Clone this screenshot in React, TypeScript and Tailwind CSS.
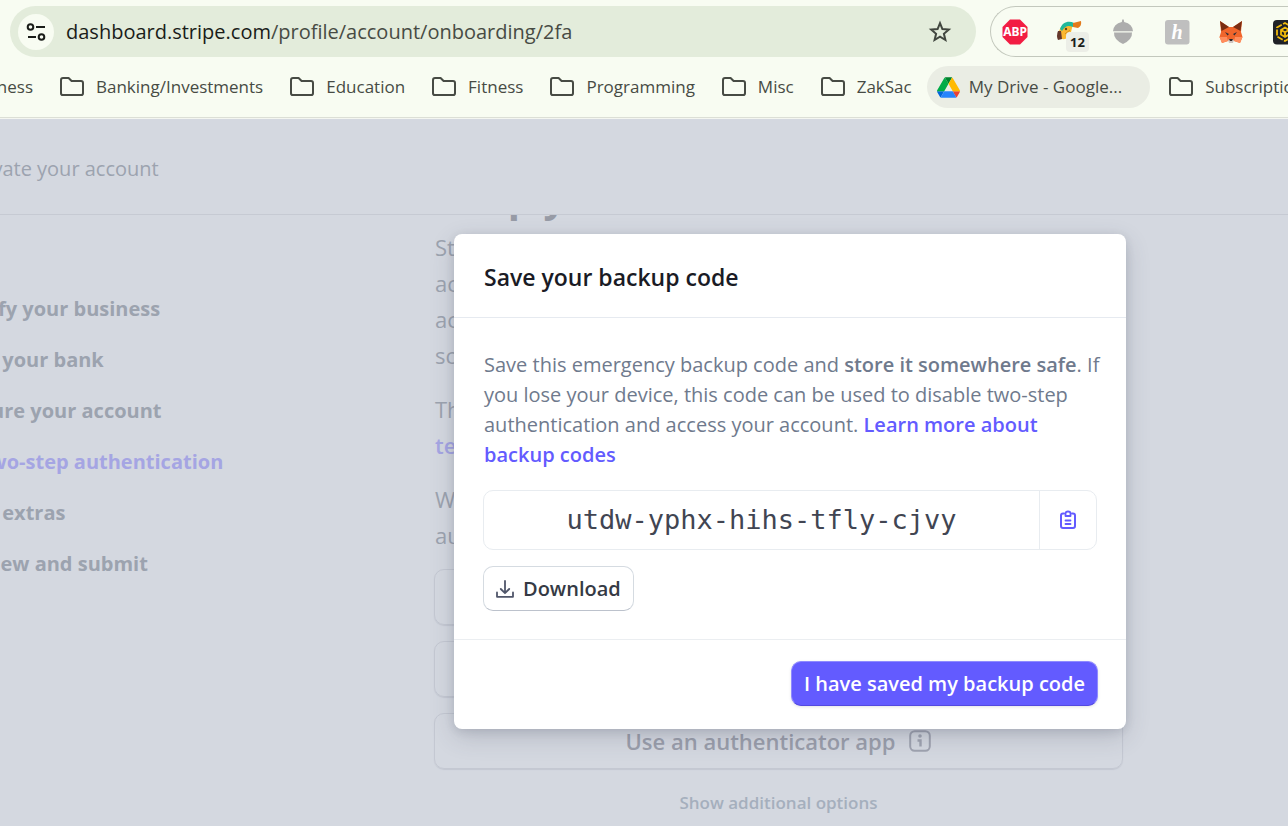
import React from 'react';

const bookmarks = ['Banking/Investments', 'Education', 'Fitness', 'Programming', 'Misc', 'ZakSac'];

function FolderIcon() {
  return (
    <svg width="24" height="20" viewBox="0 0 24 20" fill="none" className="shrink-0">
      <path
        d="M1 3.2Q1 1 3 1H8.600L11.600 4H21Q23 4 23 6V16.200Q23 18 21.200 18H2.800Q1 18 1 16.200Z"
        stroke="#474b44"
        strokeWidth="2"
        strokeLinejoin="round"
      />
    </svg>
  );
}

function TuneIcon() {
  return (
    <svg width="20" height="20" viewBox="0 0 20 20" fill="none" stroke="#1a1d19" strokeWidth="2">
      <circle cx="4.5" cy="5" r="2.8" />
      <path d="M10 5H19M2 15H10" />
      <circle cx="15.5" cy="15" r="2.8" />
    </svg>
  );
}

function StarIcon() {
  return (
    <svg width="24" height="24" viewBox="0 0 24 24" fill="none" stroke="#41463f" strokeWidth="2">
      <path d="M12 3.2L14.4 9.1L20.8 9.6L15.9 13.8L17.4 20L12 16.7L6.6 20L8.1 13.8L3.2 9.6L9.6 9.1Z" />
    </svg>
  );
}

function DriveIcon() {
  return (
    <svg width="23" height="21" viewBox="0 0 87.3 78" className="shrink-0">
      <path fill="#0066da" d="m6.6 66.85 3.85 6.65c.8 1.4 1.95 2.5 3.3 3.3l13.75-23.8h-27.5c0 1.55.4 3.1 1.2 4.5z" />
      <path fill="#00ac47" d="m43.65 25-13.75-23.8c-1.35.8-2.5 1.9-3.3 3.3l-25.4 44a9.06 9.06 0 0 0 -1.2 4.5h27.5z" />
      <path fill="#ea4335" d="m73.55 76.8c1.35-.8 2.5-1.9 3.3-3.3l1.6-2.75 7.65-13.25c.8-1.4 1.2-2.95 1.2-4.5h-27.502l5.852 11.5z" />
      <path fill="#00832d" d="m43.65 25 13.75-23.8c-1.35-.8-2.9-1.2-4.5-1.2h-18.5c-1.6 0-3.15.45-4.5 1.2z" />
      <path fill="#2684fc" d="m59.8 53h-32.3l-13.75 23.8c1.35.8 2.9 1.2 4.5 1.2h50.8c1.6 0 3.15-.45 4.5-1.2z" />
      <path fill="#ffba00" d="m73.4 26.5-12.7-22c-.8-1.4-1.95-2.5-3.3-3.3l-13.75 23.8 16.15 28h27.45c0-1.55-.4-3.1-1.2-4.5z" />
    </svg>
  );
}

function AdblockIcon() {
  return (
    <svg width="26" height="26" viewBox="0 0 26 26">
      <path d="M8 .5H18L25.5 8V18L18 25.5H8L.5 18V8Z" fill="#f21d43" />
      <text x="13" y="17.4" textAnchor="middle" fill="#fff" fontSize="12" fontWeight="700" fontFamily="Noto Sans, sans-serif">
        ABP
      </text>
    </svg>
  );
}

function BirdIcon() {
  return (
    <svg width="26" height="26" viewBox="0 0 26 26">
      <path d="M3 12C6 5 11 3 17 5L14 17C10 21 5 21 4 18Z" fill="#fbb72f" />
      <path d="M4 10C6 3 13 1 18 4L17 8C12 6 9 7 6 12Z" fill="#1fb89b" />
      <path d="M17 4L25 2Q26 7 22 9L17 8Z" fill="#e27a1c" />
      <path d="M2 12Q0 17 2 21L6 20L5 12Z" fill="#65382b" />
      <circle cx="10" cy="10" r="1.2" fill="#5b4b1c" />
      <path d="M9 15L14 11" stroke="#d18b1c" />
    </svg>
  );
}

function AcornIcon() {
  return (
    <svg width="26" height="26" viewBox="0 0 26 26" fill="#adadad">
      <path d="M12.300 .5H13.700L14.200 3Q22.500 5 23 12.200H3Q3.500 5 11.800 3Z" />
      <path d="M4 13.500H22Q22.500 20.500 13 25Q3.500 20.500 4 13.500Z" />
    </svg>
  );
}

function HoneyIcon() {
  return (
    <svg width="26" height="26" viewBox="0 0 26 26">
      <rect x="1" y="1" width="24.5" height="24.5" rx="3" fill="#bfbfbf" />
      <text x="13" y="20" textAnchor="middle" fill="#fff" fontSize="20" fontStyle="italic" fontWeight="700" fontFamily="Liberation Serif, serif">
        h
      </text>
    </svg>
  );
}

function FoxIcon() {
  return (
    <svg width="26" height="26" viewBox="0 0 26 26">
      <path d="M2 2L11 8H15L24 2L23 13L24.500 18L22 24L16 22H10L4 24L1.500 18L3 13Z" fill="#f0652b" />
      <path d="M2 2L11 8L3.500 12ZM24 2L15 8L22.500 12Z" fill="#7a2d12" />
      <path d="M4 24L1.500 18H9L10 22ZM22 24L24.500 18H17L16 22Z" fill="#ff8d5d" />
      <path d="M7 13L11 15L9.500 16.500ZM19 13L15 15L16.500 16.500Z" fill="#2b2f3a" />
      <path d="M10 21L11 24H15L16 21L14.500 20H11.500Z" fill="#cfc4c0" />
      <path d="M11 20H15L14 22H12Z" fill="#2b2020" />
    </svg>
  );
}

function CubeIcon() {
  return (
    <svg width="26" height="26" viewBox="0 0 26 26">
      <rect x="1" y="1" width="25" height="24.500" rx="4" fill="#1f2127" />
      <g fill="none" stroke="#f0b90b" strokeWidth="1.800">
        <path d="M13 4L21 8.500V17.500L13 22L5 17.500V8.500Z" strokeDasharray="6 1.500" />
        <path d="M9 11L13 8.500L17 11V15.500L13 18L9 15.500ZM9 11L13 13.300L17 11M13 13.300V18" />
      </g>
    </svg>
  );
}

function ClipboardIcon() {
  return (
    <svg width="18" height="20" viewBox="0 0 18 20" fill="none" stroke="#635bff" strokeWidth="2" strokeLinecap="round" strokeLinejoin="round">
      <path d="M5 3.500H4Q2 3.500 2 5.500V16Q2 18 4 18H14Q16 18 16 16V5.500Q16 3.500 14 3.500H13" />
      <path d="M6.500 3.500Q6.500 1.500 9 1.500T11.500 3.500V6H6.500Z" strokeWidth="1.800" />
      <path d="M6.500 10.500H11.500M6.500 14H11.500" strokeWidth="1.800" />
    </svg>
  );
}

function DownloadIcon() {
  return (
    <svg width="18" height="18" viewBox="0 0 18 18" fill="none" stroke="#50566a" strokeWidth="1.800" strokeLinecap="round" strokeLinejoin="round">
      <path d="M9 1V13M4.800 9L9 13.200L13.200 9M1 12.500V16.800H17V12.500" />
    </svg>
  );
}

function InfoIcon() {
  return (
    <svg width="22" height="22" viewBox="0 0 22 22" fill="none" stroke="#9fa3b0" strokeWidth="2">
      <rect x="1.200" y="1.200" width="19.600" height="19.600" rx="4.500" />
      <circle cx="11" cy="6" r="1.800" fill="#9fa3b0" stroke="none" />
      <path d="M8.500 10.500H11.500V16.500" strokeWidth="2.400" />
    </svg>
  );
}

function Browser() {
  return (
    <header className="shrink-0 border-b border-[#dcdfd6] bg-[#f8fcf2] pt-[6px]">
      <div className="flex gap-[14px] pl-[10px]">
        <div className="flex h-[51px] min-w-0 flex-1 items-center rounded-full bg-[#e3ecdb] pr-6 pl-2">
          <button aria-label="View site information" className="flex size-9 shrink-0 items-center justify-center rounded-full bg-[#f8fcf2]">
            <TuneIcon />
          </button>
          <div className="min-w-0 flex-1 truncate pl-3 text-[20px] text-[#474b44]">
            <span className="text-[#1a1d19]">dashboard.stripe.com</span>/profile/account/onboarding/2fa
          </div>
          <button aria-label="Bookmark this tab">
            <StarIcon />
          </button>
        </div>
        <div className="flex w-[298px] shrink-0 items-center gap-7 overflow-hidden rounded-l-full border border-r-0 border-[#c3c8bd] pl-[11px]">
          <button aria-label="Adblock" className="shrink-0"><AdblockIcon /></button>
          <button aria-label="Shopping helper" className="relative shrink-0">
            <BirdIcon />
            <span className="absolute top-[13px] left-[10px] rounded bg-[#eceee7] px-1 text-[13px] leading-5 font-bold text-[#1a1d19]">12</span>
          </button>
          <button aria-label="Acorn" className="shrink-0"><AcornIcon /></button>
          <button aria-label="Honey" className="shrink-0"><HoneyIcon /></button>
          <button aria-label="Fox wallet" className="shrink-0"><FoxIcon /></button>
          <button aria-label="Cube wallet" className="shrink-0"><CubeIcon /></button>
        </div>
      </div>
      <nav aria-label="Bookmarks" className="mt-[9px] mb-[9px] flex h-[42px] items-center gap-[27px] overflow-hidden text-[17px] whitespace-nowrap text-[#474b44]">
        <a href="#" className="flex w-[33px] shrink-0 justify-end overflow-hidden">Business</a>
        {bookmarks.map((name) => (
          <a key={name} href="#" className="flex shrink-0 items-center gap-3">
            <FolderIcon />
            {name}
          </a>
        ))}
        <a href="#" className="-mr-2 -ml-3 flex h-full shrink-0 items-center gap-[9px] rounded-full bg-[#eaede4] pr-7 pl-[10px]">
          <DriveIcon />
          My Drive - Google...
        </a>
        <a href="#" className="flex shrink-0 items-center gap-3">
          <FolderIcon />
          Subscriptions
        </a>
      </nav>
    </header>
  );
}

function Steps() {
  return (
    <nav aria-label="Onboarding steps" className="-ml-[42px] w-[476px] shrink-0 pt-[76px] text-[20px] leading-9 font-bold text-[#9ca3af]">
      <ul className="flex flex-col gap-[15px]">
        <li><a href="#">Verify your business</a></li>
        <li><a href="#">Add your bank</a></li>
        <li><a href="#">Secure your account</a></li>
        <li className="pl-5 text-[#a5a5e3]"><a href="#">Two-step authentication</a></li>
        <li><a href="#">Add extras</a></li>
        <li><a href="#">Review and submit</a></li>
      </ul>
    </nav>
  );
}

const option =
  'flex h-14 w-full items-center justify-center gap-[14px] rounded-[10px] border border-[#c4c8d2] shadow-[0_1px_1px_#c4c8d2] text-[22px] font-semibold text-[#9a9eab]';

function Content() {
  return (
    <main className="w-[689px]">
      <h1 className="-mt-[45px] mb-[5px] text-[40px] leading-[54px] font-bold text-[#979ba6]">Keep your</h1>
      <div className="flex flex-col gap-[18px] pl-px text-[22px] leading-9 text-[#9ca3af]">
        <p>St<br />ac<br />ac<br />sc</p>
        <p>Th<br /><a href="#" className="font-semibold text-[#a5a5e3]">te</a></p>
        <p>W<br />au</p>
      </div>
      <div className="mt-4 flex flex-col gap-4">
        <button aria-label="First method" className={option} />
        <button aria-label="Second method" className={option} />
        <button className={option}>
          Use an authenticator app
          <InfoIcon />
        </button>
      </div>
      <div className="mt-5 text-center">
        <button className="text-[17px] leading-7 font-semibold text-[#a5afbd]">Show additional options</button>
      </div>
    </main>
  );
}

function BackupDialog() {
  return (
    <section
      role="dialog"
      aria-labelledby="backup-title"
      className="w-[672px] rounded-lg bg-white shadow-[0_8px_24px_rgba(60,66,87,0.2),0_2px_8px_rgba(60,66,87,0.14)]"
    >
      <div className="border-b border-[#e6eaf0] px-[30px] pt-[26px] pb-[23px]">
        <h2 id="backup-title" className="text-[23px] leading-[34px] font-semibold text-[#1a1b25]">Save your backup code</h2>
      </div>
      <div className="px-[29px] pt-8 pb-7">
        <p className="-mr-2 pl-px text-[20px] leading-[30px] text-[#6f7a8d]">
          Save this emergency backup code and <strong className="font-semibold">store it somewhere safe</strong>. If
          you lose your device, this code can be used to disable two-step authentication and access your account.{' '}
          <a href="#" className="font-semibold text-[#635bff]">Learn more about backup codes</a>
        </p>
        <div className="mt-5 flex h-[60px] rounded-[10px] border border-[#e8ecf0]">
          <code className="flex flex-1 items-center justify-center font-['DejaVu_Sans_Mono',monospace] text-[27px] text-[#414552]">
            utdw-yphx-hihs-tfly-cjvy
          </code>
          <button aria-label="Copy backup code" className="flex w-[57px] items-center justify-center border-l border-[#e8ecf0]">
            <ClipboardIcon />
          </button>
        </div>
        <button className="mt-4 flex h-[45px] items-center gap-[9px] rounded-[10px] border border-[#d5dbe1] border-b-[#bcc2cc] px-3 text-[20px] font-semibold text-[#353a44]">
          <DownloadIcon />
          Download
        </button>
      </div>
      <div className="flex justify-end border-t border-[#ebeef1] px-[28px] pt-[21px] pb-[23px]">
        <button className="h-[45px] rounded-[10px] border border-[#8f8aff] border-b-[#5349e0] bg-[#635bff] px-3 text-[20px] font-semibold text-white shadow-[0_1px_3px_rgba(60,66,87,0.15)]">
          I have saved my backup code
        </button>
      </div>
    </section>
  );
}

export default function App() {
  return (
    <div className="flex h-screen flex-col overflow-hidden font-['Open_Sans','Noto_Sans',sans-serif]">
      <Browser />
      <div className="relative flex min-h-0 flex-1 flex-col border-t border-[#f4f6f1] bg-[#d4d8e0]">
        <div className="flex h-[96px] shrink-0 items-center border-b border-[#c6cad3] pt-1">
          <p className="-ml-[42px] text-[20px] text-[#9ca3af]">Activate your account</p>
        </div>
        <div className="flex min-h-0 flex-1 overflow-hidden">
          <Steps />
          <Content />
        </div>
        <div className="absolute inset-0 flex items-start pt-[115px] pl-[454px]">
          <BackupDialog />
        </div>
      </div>
    </div>
  );
}
